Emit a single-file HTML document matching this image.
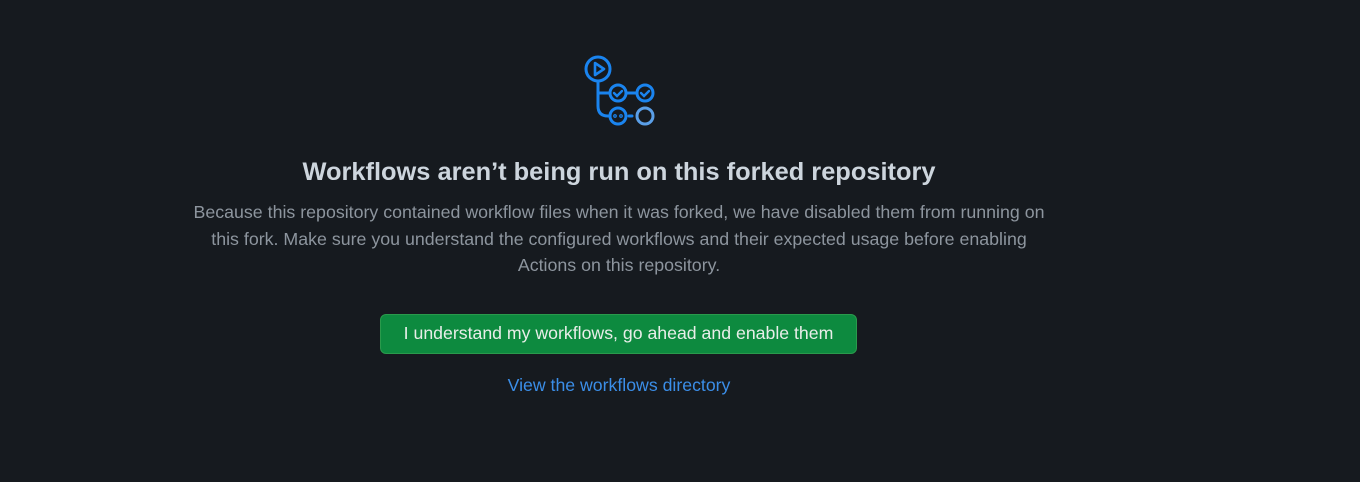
<!DOCTYPE html>
<html><head><style>
body{margin:0;background:#161a1f;width:1360px;height:482px;font-family:"Liberation Sans",sans-serif;overflow:hidden}
.t{position:absolute;left:0;width:1238px;text-align:center;top:158px;font-size:25.4px;font-weight:bold;color:#cdd5dd}
.p{position:absolute;left:189px;width:860px;text-align:center;top:199px;font-size:17.8px;line-height:26.5px;color:#8d959e}
.b{position:absolute;left:380px;top:314px;width:475px;height:38px;border:1px solid #2a9a4c;border-radius:6px;background:#0d8a3f;color:#e8eee9;font-size:17.7px;line-height:37px;text-align:center}
.l{position:absolute;left:0;width:1238px;text-align:center;top:375px;font-size:17.7px;color:#3b8ee8}
</style></head><body>
<svg style="position:absolute;left:0;top:0" width="700" height="140" fill="none" stroke-width="3" stroke-linecap="round">
<g stroke="#1a84ef">
<circle cx="598" cy="69" r="12"/>
<path d="M595 63 L604 69 L595 75 Z" stroke-width="2.6" stroke-linejoin="round"/>
<path d="M598 81 V106 Q598 116 608 116 H610"/>
<path d="M598 93 H610"/>
<circle cx="618" cy="93" r="8"/>
<path d="M614 93 l3 3 l5 -5" stroke-width="2.4"/>
<path d="M626 93 H637"/>
<circle cx="645" cy="93" r="8"/>
<path d="M641 93 l3 3 l5 -5" stroke-width="2.4"/>
<circle cx="618" cy="116" r="8"/>
<circle cx="615" cy="116" r="0.6" stroke-width="2.5"/>
<circle cx="621" cy="116" r="0.6" stroke-width="2.5"/>
<path d="M629 116 H632"/>
</g>
<circle cx="645" cy="116" r="8" stroke="#5a9fe8"/>
</svg>
<div class="t">Workflows aren’t being run on this forked repository</div>
<div class="p">Because this repository contained workflow files when it was forked, we have disabled them from running on this fork. Make sure you understand the configured workflows and their expected usage before enabling<br>Actions on this repository.</div>
<div class="b">I understand my workflows, go ahead and enable them</div>
<div class="l">View the workflows directory</div>
</body></html>
